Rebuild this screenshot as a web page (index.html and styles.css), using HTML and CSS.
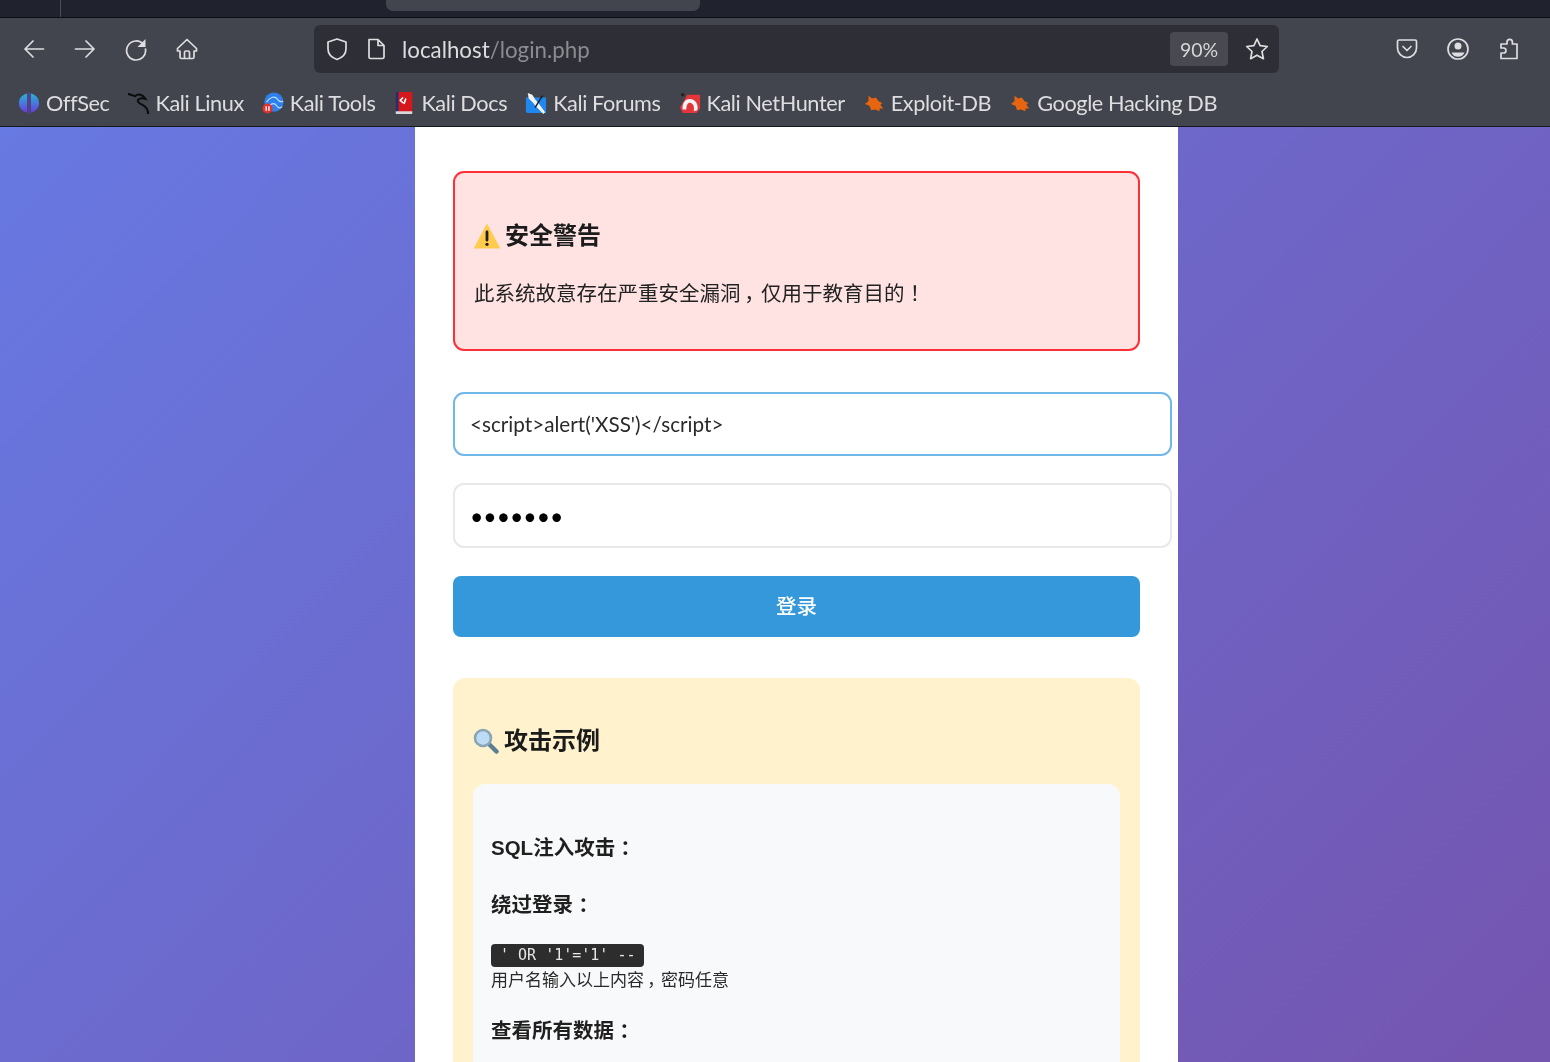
FILE: index.html
```html
<!DOCTYPE html>
<html lang="zh-CN">
<head>
<meta charset="utf-8">
<title>localhost/login.php</title>
<link rel="stylesheet" href="styles.css">
</head>
<body>
<div class="chrome">
  <div class="tabstrip">
    <span class="tab-sep"></span>
    <span class="tab-active"></span>
  </div>
  <div class="toolbar">
    <div class="navrow">
      <div class="btns">
        <span class="btn"><svg class="ico" viewBox="0 0 24 24"><path d="M21.500 12H3M11 4l-8 8 8 8"/></svg></span>
        <span class="btn"><svg class="ico" viewBox="0 0 24 24"><path d="M2.500 12H21M13 4l8 8-8 8"/></svg></span>
        <span class="btn"><svg class="ico" viewBox="0 0 24 24"><path d="M19.500 7.500A9.500 9.500 0 1 0 21.500 12"/><path class="solid" d="M21.500 2v8h-8z"/></svg></span>
        <span class="btn"><svg class="ico" viewBox="0 0 24 24"><path d="M12 2.500 2.500 11.500v2.500h2.500v6a1.500 1.500 0 0 0 1.500 1.500h11a1.500 1.500 0 0 0 1.500-1.500v-6h2.500v-2.500zM9.500 21.500v-6a1.500 1.500 0 0 1 1.500-1.500h2a1.500 1.500 0 0 1 1.500 1.500v6"/></svg></span>
      </div>
      <div class="urlbar">
        <svg class="ico shield" viewBox="0 0 24 24"><path d="M12 2 3 5v7c0 5 3.500 8.500 9 10.500 5.500-2 9-5.500 9-10.500V5z"/></svg>
        <svg class="ico pagei" viewBox="0 0 24 24"><path d="M5 2.500h9l6 6V20a1.500 1.500 0 0 1-1.500 1.500h-12A1.500 1.500 0 0 1 5 20zM14 2.500v6h6"/></svg>
        <span class="url"><span class="host">localhost</span><span class="path">/login.php</span></span>
        <span class="zoom">90%</span>
        <svg class="ico star" viewBox="0 0 24 24"><path d="m12 2 3.100 6.600 7.200.9-5.300 5 1.400 7.200-6.400-3.500-6.400 3.500 1.400-7.200-5.300-5 7.200-.9z"/></svg>
      </div>
      <div class="btns">
        <span class="btn"><svg class="ico" viewBox="0 0 24 24"><path d="M4 3h16a1.500 1.500 0 0 1 1.500 1.500V11a9.500 9.500 0 0 1-19 0V4.500A1.500 1.500 0 0 1 4 3zM8 9.500l4 4 4-4"/></svg></span>
        <span class="btn"><svg class="ico" viewBox="0 0 24 24"><circle cx="12" cy="12" r="10"/><circle class="solid" cx="12" cy="9" r="3.500"/><path class="solid" d="M5.500 15.500h13c-1 2.800-3.500 4.300-6.500 4.300s-5.500-1.500-6.500-4.300z"/></svg></span>
        <span class="btn"><svg class="ico" viewBox="0 0 24 24"><path d="M4 21.500V16h2.500a2.500 2.500 0 0 0 0-5H4V7h6V5a2.700 2.700 0 0 1 5.400 0v2H20v14.500z"/></svg></span>
      </div>
    </div>
    <div class="bookmarks">
      <span class="bm"><svg class="fav" viewBox="0 0 24 24"><defs><linearGradient id="off" x1="0" y1="0" x2="0" y2="1"><stop offset="0" stop-color="#27b6d6"/><stop offset="1" stop-color="#6a3be0"/></linearGradient></defs><path fill="url(#off)" d="M10 1.500C4 3 1 7 1 12s3 9 9 10.500zM14 1.500C20 3 23 7 23 12s-3 9-9 10.500z"/><rect x="11.400" y="0" width="1.200" height="24" fill="#6a3be0"/></svg><span class="bm-label">OffSec</span></span>
      <span class="bm"><svg class="fav" viewBox="0 0 24 24"><path class="dragon" d="M0 2l8 2.500c3-3 8-2 11 3-3-1-6-1-8 1-1 2 1 4 4 5 4 2 7 5 7 10.500"/></svg><span class="bm-label">Kali Linux</span></span>
      <span class="bm"><svg class="fav" viewBox="0 0 24 24"><circle cx="13" cy="11" r="10.500" fill="#2f80ed"/><path d="M5 11c4-6 9-7 12-3 2 3 4 3 6 2M8 15c3-3 6-3 8 0s4 3 6 1" fill="none" stroke="#b9dcff" stroke-width="1.300"/><circle cx="6" cy="18" r="5.500" fill="#e5322e"/><rect x="3.800" y="15.500" width="1.500" height="5" fill="#fff"/><rect x="6.800" y="15.500" width="1.500" height="5" fill="#fff"/></svg><span class="bm-label">Kali Tools</span></span>
      <span class="bm"><svg class="fav" viewBox="0 0 24 24"><rect x="3" y="0" width="18" height="22" fill="#d4181c"/><rect x="3" y="0" width="3" height="22" fill="#1c3270"/><rect x="3" y="21" width="18" height="3" fill="#d8d8d8"/><path d="M11 6l-3 3 3 3M14 7l-2 6" fill="none" stroke="#fff" stroke-width="1.800"/></svg><span class="bm-label">Kali Docs</span></span>
      <span class="bm"><svg class="fav" viewBox="0 0 24 24"><path d="M1 6h22v17H3a2 2 0 0 1-2-2z" fill="#1e88f0"/><path d="M3 1l5 2 3 5 5 6 6 8-2 2-7-7-5-6-4-4z" fill="#f2f2f2"/><path d="M19 4l-8 13" stroke="#1a1a1a" stroke-width="1.500"/></svg><span class="bm-label">Kali Forums</span></span>
      <span class="bm"><svg class="fav" viewBox="0 0 24 24"><path d="M9 3h14v15l-4 5H4L1 17z" fill="#e3353a"/><path d="M4 19c-1-8 4-13 10-11s7 8 6 12l-4 1c1-4 0-8-3-9s-5 2-5 7z" fill="#f4f4f4"/><circle cx="4" cy="3" r="2" fill="#222"/></svg><span class="bm-label">Kali NetHunter</span></span>
      <span class="bm"><svg class="fav" viewBox="0 0 24 24"><path class="bug" d="M6 4l4 3 4-1 3 4 4 2-2 2 3 4-4 0 0 3-5-2-4 1-2-5-5-2 4-3z"/></svg><span class="bm-label">Exploit-DB</span></span>
      <span class="bm"><svg class="fav" viewBox="0 0 24 24"><path class="bug" d="M6 4l4 3 4-1 3 4 4 2-2 2 3 4-4 0 0 3-5-2-4 1-2-5-5-2 4-3z"/></svg><span class="bm-label">Google Hacking DB</span></span>
    </div>
  </div>
</div>
<main class="page">
  <section class="card">
    <div class="alert">
      <h3 class="box-title"><svg class="emoji" viewBox="0 0 24 24"><path d="M12 1.500 23.500 23H.5z" fill="#ffcc4d" stroke="#ffcc4d" stroke-linejoin="round"/><rect x="10.700" y="7" width="2.600" height="10" rx="1.200" fill="#231f20"/><circle cx="12" cy="19.700" r="1.500" fill="#231f20"/></svg>安全警告</h3>
      <p class="alert-text">此系统故意存在严重安全漏洞<span class="mid">，</span>仅用于教育目的<span class="mid">！</span></p>
    </div>
    <form class="login">
      <input class="field focus" type="text" value="&lt;script&gt;alert('XSS')&lt;/script&gt;">
      <input class="field secret" type="password" value="1234567">
      <button class="submit" type="button">登录</button>
    </form>
    <div class="examples">
      <h3 class="box-title"><svg class="emoji" viewBox="0 0 26 26"><path d="M15 15l8.500 8.500" stroke="#5b7f95" stroke-width="4.500" stroke-linecap="round"/><circle cx="10" cy="10" r="8" fill="#bbdcf4" stroke="#8aa5b5" stroke-width="2.600"/></svg>攻击示例</h3>
      <div class="ex-inner">
        <h4 class="ex-title">SQL注入攻击<span class="mid">：</span></h4>
        <p class="ex-sub">绕过登录<span class="mid">：</span></p>
        <code class="snippet">' OR '1'='1' --</code>
        <small class="note">用户名输入以上内容<span class="mid">，</span>密码任意</small>
        <p class="ex-sub">查看所有数据<span class="mid">：</span></p>
      </div>
    </div>
  </section>
</main>
</body>
</html>
```

FILE: styles.css
```css
* { box-sizing: border-box; }
html, body { margin: 0; height: 100%; }
body {
  width: 1550px;
  height: 1062px;
  overflow: hidden;
  display: flex;
  flex-direction: column;
  font-family: "Liberation Sans", "Noto Sans CJK SC", sans-serif;
  color: #1f1f1f;
}
.chrome { flex: none; filter: blur(0.4px); }
.tabstrip {
  height: 18px;
  background: #20232e;
  border-bottom: 1px solid #0c0d12;
  display: flex;
}
.tab-sep { width: 1px; height: 17px; margin-left: 60px; background: #4c4e57; }
.tab-active {
  width: 314px;
  height: 11px;
  margin-left: 325px;
  background: #42454e;
  border-radius: 0 0 7px 7px;
}
.toolbar {
  height: 109px;
  background: #42454d;
  border-bottom: 1px solid #17181c;
}
.navrow {
  height: 64px;
  padding: 7px 16px 9px 8px;
  display: flex;
  align-items: center;
  justify-content: space-between;
}
.btns { display: flex; }
.btn { width: 51px; display: flex; justify-content: center; }
.ico {
  width: 24px;
  height: 24px;
  fill: none;
  stroke: #dedee0;
  stroke-width: 1.700;
  stroke-linejoin: round;
  stroke-linecap: round;
}
.ico .solid { fill: #dedee0; stroke: none; }
.urlbar {
  width: 965px;
  height: 48px;
  background: #2e2f36;
  border-radius: 6px;
  display: flex;
  align-items: center;
  padding: 0 10px 0 11px;
  font-family: "Lato", "Noto Sans", sans-serif;
}
.shield { flex: none; }
.pagei { flex: none; margin-left: 15px; }
.url { margin-left: 14px; font-size: 22.300px; flex: 1; }
.host { color: #dcdcde; }
.path { color: #8b8c91; }
.zoom {
  width: 58px;
  height: 34px;
  background: #494a51;
  border-radius: 4px;
  color: #d6d6d8;
  font-size: 19.500px;
  display: flex;
  align-items: center;
  justify-content: center;
}
.star { flex: none; margin-left: 17px; }
.bookmarks {
  height: 44px;
  padding: 0 0 2px 18px;
  display: flex;
  align-items: center;
  gap: 18px;
  font-family: "Lato", "Noto Sans", sans-serif;
  font-size: 21.700px;
  letter-spacing: -0.400px;
  color: #dedee0;
  white-space: nowrap;
}
.bm { display: flex; align-items: center; gap: 6px; }
.fav { width: 22px; height: 22px; flex: none; }
.dragon { fill: none; stroke: #0c0c0e; stroke-width: 2.200; }
.bug { fill: #e8650f; }
.page {
  flex: 1;
  min-height: 0;
  background: linear-gradient(135deg, #6779e2 0%, #7553ad 105%);
  padding-left: 415px;
  display: flex;
  overflow: hidden;
}
.card {
  width: 763px;
  background: #fff;
  padding: 44px 38px 0;
  filter: blur(0.4px);
}
.alert {
  height: 180px;
  background: #ffe3e3;
  border: 2px solid #ff2f37;
  border-radius: 11px;
  padding: 48px 19px 0;
}
.box-title {
  margin: 0;
  font-size: 24px;
  line-height: 30px;
  font-weight: 700;
  display: flex;
  align-items: center;
  gap: 5px;
  color: #1b1b1b;
}
.emoji { width: 26px; height: 26px; flex: none; }
.mid { display: inline-block; width: 1em; text-align: center; font-feature-settings: "palt"; }
.alert-text { margin: 29px 0 0; font-size: 20.500px; line-height: 28px; color: #222; }
.login { margin-top: 41px; display: flex; flex-direction: column; }
.field {
  box-sizing: content-box;
  width: calc(100% - 2px);
  height: 30px;
  padding: 15px;
  margin-bottom: 27px;
  border: 2px solid #e8e8e8;
  border-radius: 11px;
  background: #fff;
  font-family: "Lato", "Noto Sans", sans-serif;
  font-size: 20.700px;
  color: #2a2a2a;
  outline: none;
}
.field.focus { border-color: #70b7ea; }
.field.secret { height: 31px; margin-bottom: 28px; font-size: 23px; color: #000; }
.submit {
  height: 61px;
  border: 0;
  border-radius: 8px;
  background: #3498db;
  color: #fff;
  padding: 0 0 4px;
  font-family: "Noto Sans CJK SC", sans-serif;
  font-size: 20.500px;
  font-weight: 500;
}
.examples {
  margin-top: 41px;
  background: #fff2cc;
  border-radius: 12px;
  padding: 48px 20px 0;
  height: 500px;
}
.ex-inner {
  margin-top: 28px;
  height: 400px;
  background: #f8f9fa;
  border-radius: 12px;
  padding: 50px 18px 0;
}
.ex-title { margin: 0; font-size: 20.500px; line-height: 28px; font-weight: 700; }
.ex-sub { margin: 29px 0 0; font-size: 20.500px; line-height: 28px; font-weight: 700; }
.snippet {
  display: block;
  width: max-content;
  margin-top: 25px;
  height: 23px;
  padding: 0 9px;
  background: #2d2d2d;
  border-radius: 4px;
  color: #e6e6e6;
  font-family: "DejaVu Sans Mono", monospace;
  font-size: 15px;
  line-height: 23px;
  white-space: pre;
}
.note { display: block; margin-top: 2px; font-size: 17px; line-height: 24px; color: #2a2a2a; }
.note + .ex-sub { margin-top: 24px; }
```
